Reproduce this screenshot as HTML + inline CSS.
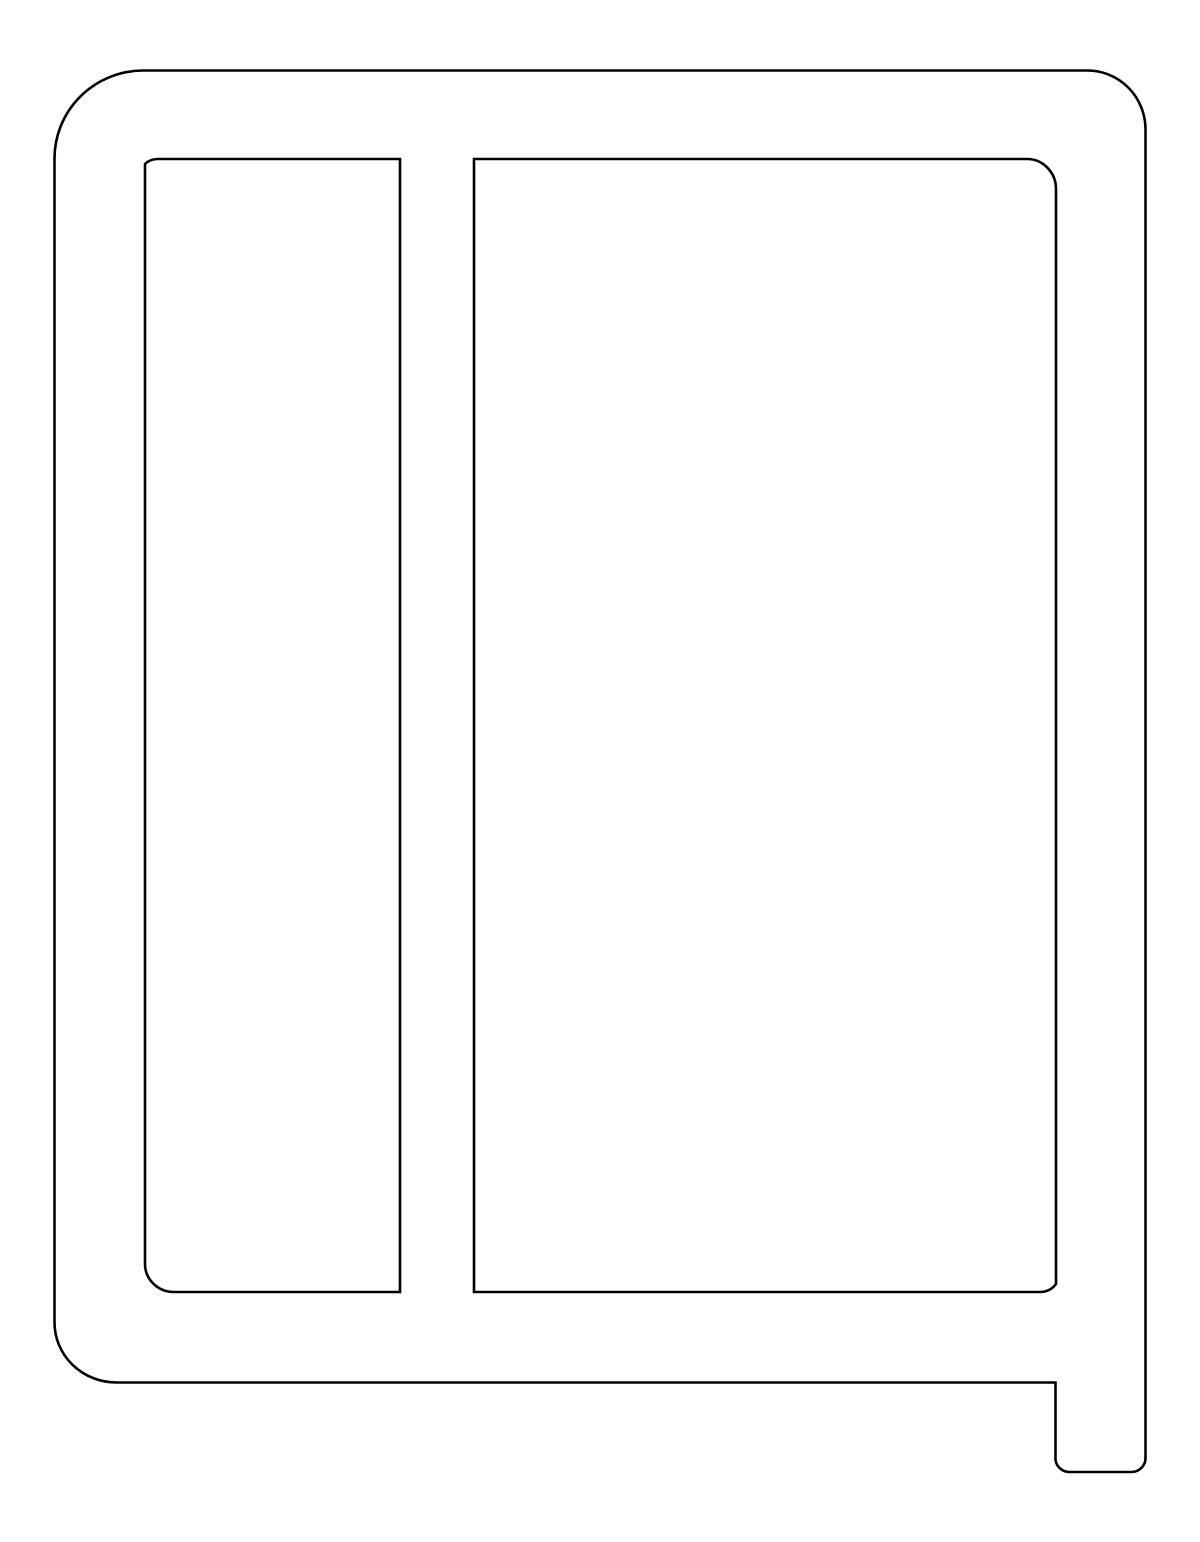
<!DOCTYPE html>
<html><head><style>html,body{margin:0;padding:0;background:#fff;width:1200px;height:1542px;overflow:hidden}</style></head>
<body>
<svg width="1200" height="1542" viewBox="0 0 1200 1542" xmlns="http://www.w3.org/2000/svg" fill="none" stroke="#000" stroke-width="2.6">
<path d="M54.5 158 A89 88 0 0 1 143 70.5 L1087 70.5 A58 59 0 0 1 1145.5 130 L1145.5 1458 A14 14 0 0 1 1131 1472 L1070 1472 A14 14 0 0 1 1055.5 1460 L1055.5 1382.5 L117 1382.5 A62 60 0 0 1 54.5 1322 Z"/>
<path d="M158 159 L400 159 L400 1292 L174 1292 A29 28 0 0 1 145 1264 L145 164 Q150 159 158 159 Z"/>
<path d="M474 159 L1027 159 A29 30 0 0 1 1056 189 L1056 1284 Q1050 1292 1040 1292 L474 1292 Z"/>
</svg>
</body></html>
